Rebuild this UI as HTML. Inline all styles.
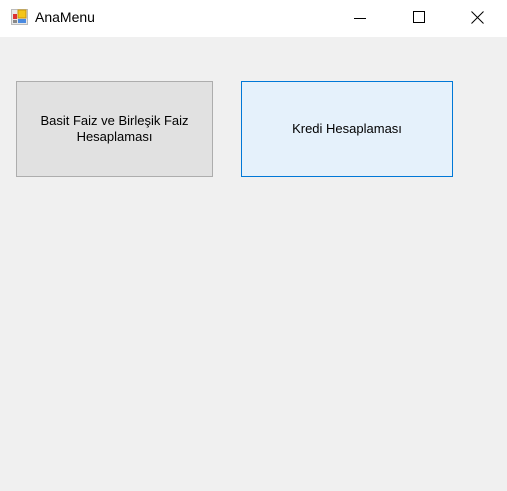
<!DOCTYPE html>
<html><head><style>
body{margin:0;width:507px;height:491px;overflow:hidden;background:#f0f0f0;font-family:"Liberation Sans",sans-serif;position:relative}
.title{position:absolute;left:0;top:0;width:507px;height:37px;background:#fff}
.t{position:absolute;left:35px;top:9px;font-size:14px;color:#000}
.btn{position:absolute;box-sizing:border-box;display:flex;align-items:center;justify-content:center;text-align:center;font-size:13px;color:#000;line-height:16px}
</style></head><body>
<div class="title">
<svg style="position:absolute;left:11px;top:8px" width="18" height="18" viewBox="0 0 18 18">
<rect x="0.5" y="1.5" width="16" height="15" fill="#e8e8e8" stroke="#bbb"/>
<rect x="7" y="2" width="8" height="8" fill="#f5c518" stroke="#c9950a"/>
<rect x="2" y="6" width="4" height="5" fill="#d33"/>
<rect x="7" y="11" width="8" height="4" fill="#4a8ae0"/>
<rect x="2" y="12" width="4" height="3" fill="#888"/>
</svg>
<div class="t">AnaMenu</div>
<svg style="position:absolute;left:354px;top:11px" width="14" height="14"><line x1="0" y1="7.5" x2="12" y2="7.5" stroke="#000"/></svg>
<svg style="position:absolute;left:413px;top:11px" width="14" height="14"><rect x="0.5" y="0.5" width="11" height="11" fill="none" stroke="#000"/></svg>
<svg style="position:absolute;left:471px;top:11px" width="14" height="14"><path d="M0.5 0.5L12.5 12.5M12.5 0.5L0.5 12.5" stroke="#000"/></svg>
</div>
<div class="btn" style="left:16px;top:81px;width:197px;height:96px;background:#e1e1e1;border:1px solid #adadad">Basit Faiz ve Birleşik Faiz<br>Hesaplaması</div>
<div class="btn" style="left:241px;top:81px;width:212px;height:96px;background:#e5f1fb;border:1px solid #0078d7">Kredi Hesaplaması</div>
</body></html>
